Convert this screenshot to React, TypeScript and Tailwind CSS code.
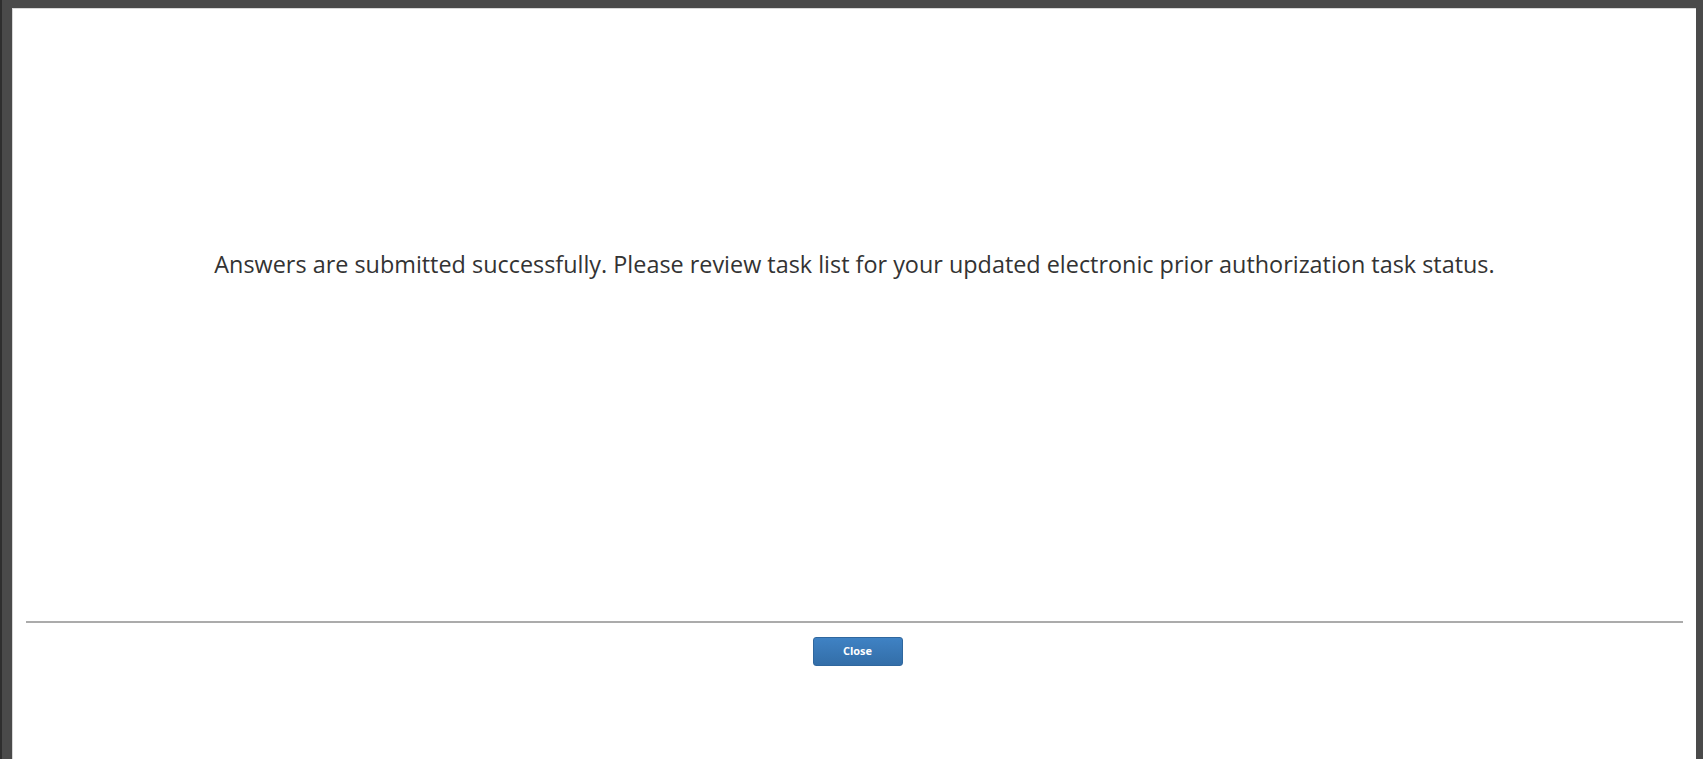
export default function App() {
  return (
    <div className="h-screen w-full overflow-hidden bg-[#4a4a4a] pt-[8px] pl-[10px] pr-[7px] border-l-[2px] border-l-[#2e2e2e]">
      <div className="h-full bg-white flex flex-col border-t border-l border-[#d8d8d8]">
        <div className="h-[612px] shrink-0 pt-[240px]">
          <p
            className="text-center text-[23.4px] leading-[30px] text-[#333333]"
            style={{ fontFamily: '"Open Sans", "Noto Sans", sans-serif' }}
          >
            Answers are submitted successfully. Please review task list for your updated electronic prior authorization task status.
          </p>
        </div>
        <div className="mx-[13px] border-t-2 border-[#ababab]" />
        <div className="flex justify-center pt-[14px] pl-[6px]">
          <button
            className="w-[90px] h-[29px] rounded-[3px] border border-[#2f679e] bg-gradient-to-b from-[#3f82c4] to-[#336ea8] text-white text-[11px] font-bold"
            style={{ fontFamily: '"Open Sans", "Liberation Sans", sans-serif' }}
          >
            Close
          </button>
        </div>
      </div>
    </div>
  );
}
